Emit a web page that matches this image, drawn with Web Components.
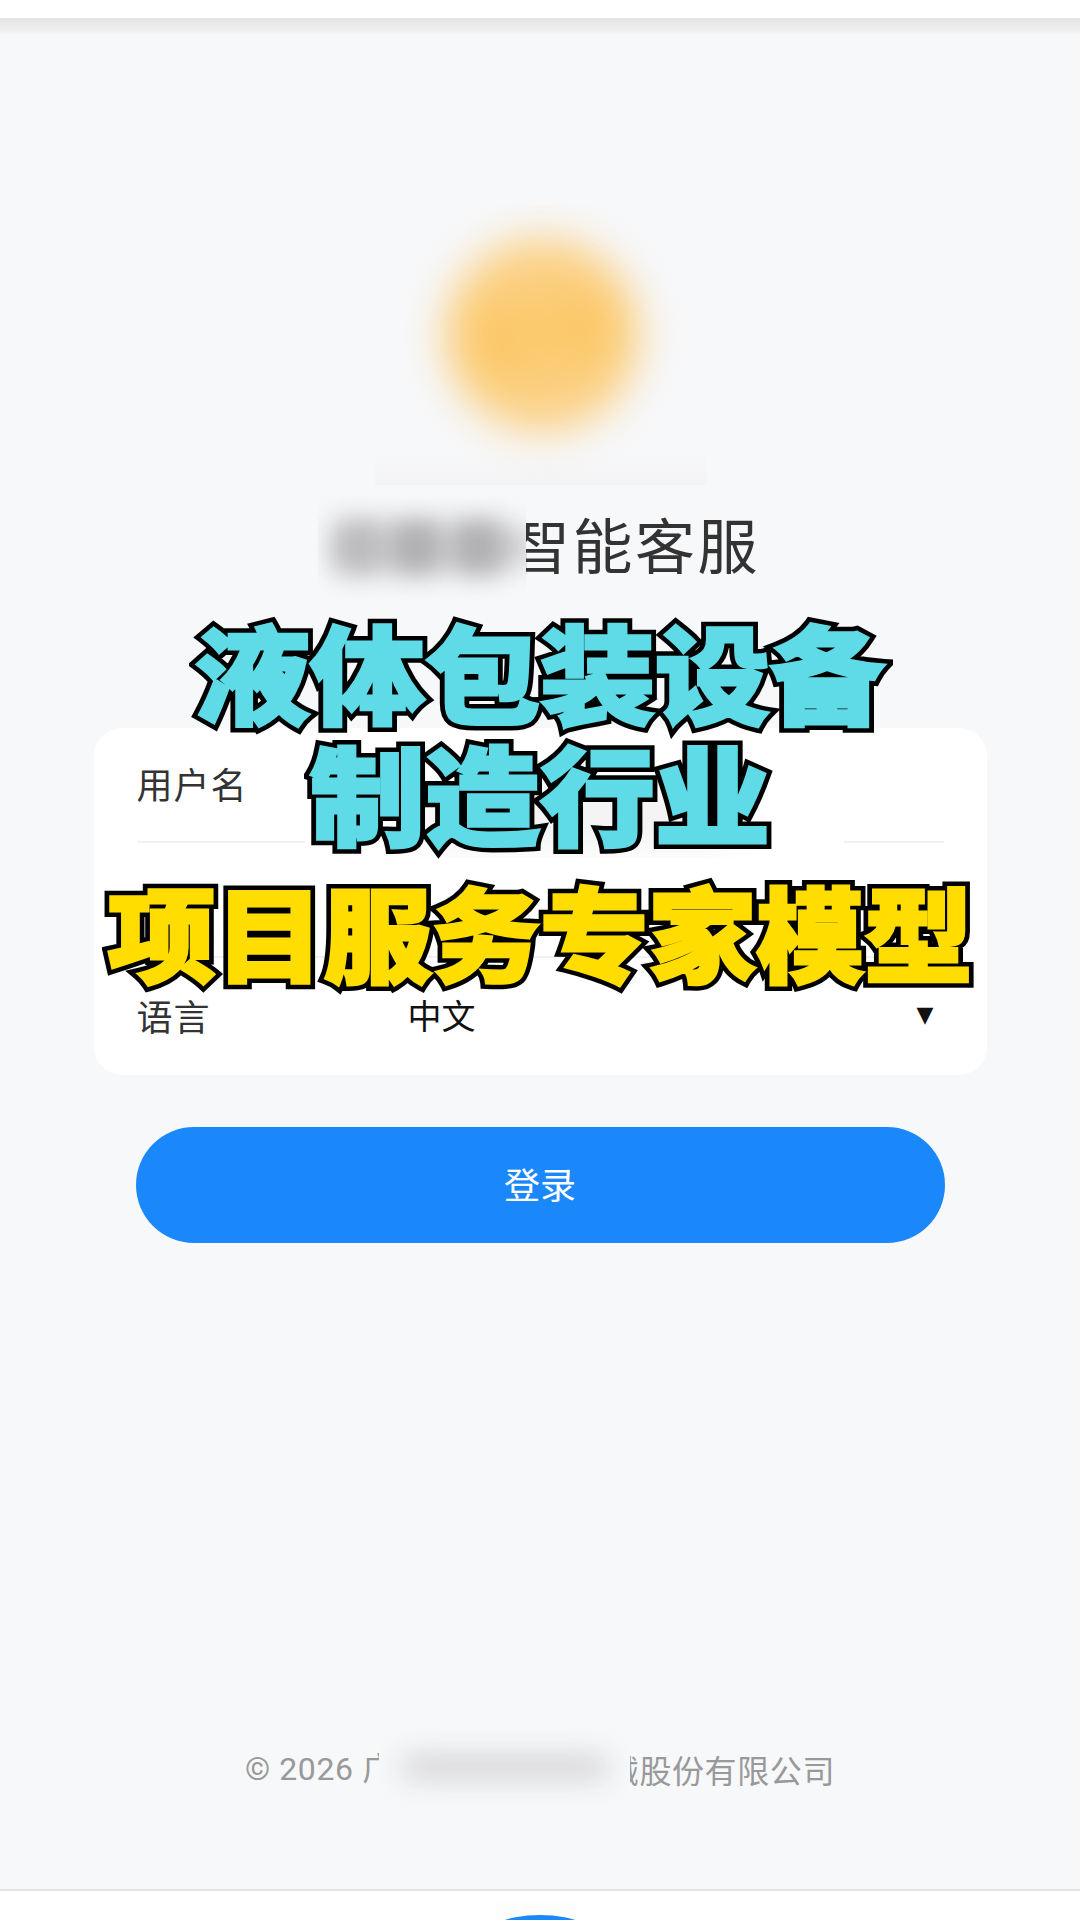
<!doctype html>
<html>
<head>
<meta charset="utf-8">
<style>
  html, body { margin: 0; padding: 0; background: #f7f8fa; }
  body { width: 1080px; height: 1920px; overflow: hidden; font-family: "Noto Sans CJK SC", "Noto Sans", sans-serif; }
</style>
</head>
<body>
<login-page>
  <blur-logo></blur-logo>
  <brand-title>智能客服</brand-title>
  <login-card>
    <form-row label="用户名"></form-row>
    <form-row></form-row>
    <form-row label="语言" value="中文" last></form-row>
  </login-card>
  <login-button>登录</login-button>
  <copy-footer></copy-footer>
  <tab-strip></tab-strip>
  <promo-banner slot="over">
    <promo-line color="#5fdbe7" size="107" scale="1.075">液体包装设备</promo-line>
    <promo-line color="#5fdbe7" size="107" scale="1.075">制造行业</promo-line>
    <promo-line color="#ffdd00" size="103" scale="1.05" class="gap">项目服务专家模型</promo-line>
  </promo-banner>
</login-page>

<script>
  function comp(name, css, html) {
    customElements.define(name, class extends HTMLElement {
      connectedCallback() {
        if (this.shadowRoot) return;
        var root = this.attachShadow({mode: 'open'});
        var out = typeof html == 'function' ? html(this) : html;
        root.innerHTML = '<style>' + css + '</style>' + out;
      }
    });
  }

  comp('login-page', `
    :host { display: flex; flex-direction: column; align-items: center; position: relative; width: 1080px; height: 1920px; overflow: hidden; }
    .top { height: 18px; width: 100%; background: #fff; flex: none; }
    .shade { height: 17px; width: 100%; flex: none; background: linear-gradient(#e3e3e5, #eeeeef 70%, #f7f8fa); }
  `, `
    <div class="top"></div>
    <div class="shade"></div>
    <slot></slot>
    <slot name="over"></slot>
  `);

  comp('blur-logo', `
    :host { display: block; position: relative; flex: none; margin-top: 170px; width: 331px; height: 280px; background: linear-gradient(#f7f8fa 88%, #f4f4f5 100%); overflow: hidden; }
    .dot { position: absolute; left: 70px; top: 33px; width: 194px; height: 194px; border-radius: 50%; filter: blur(21px);
      background: radial-gradient(circle at 28% 52%, #fbc55c 0, transparent 36%), radial-gradient(circle at 70% 46%, #fbc55c 0, transparent 36%), #fbd084; }
  `, `<div class="dot"></div>`);

  comp('brand-title', `
    :host { display: flex; position: relative; flex: none; margin-top: 15px; height: 86px; align-items: center; font-size: 60px; letter-spacing: 2.5px; color: #333; line-height: 1; }
    .hide { width: 190px; flex: none; }
    .patch { position: absolute; left: -2px; top: -4px; width: 208px; height: 104px; background: #f7f8fa; overflow: hidden; }
    .patch i { position: absolute; top: 24px; width: 52px; height: 54px; background: #b0b0b2; border-radius: 12px; filter: blur(13px); }
    .patch b { position: absolute; left: 26px; top: 32px; width: 190px; height: 38px; background: #d4d4d6; filter: blur(12px); }
  `, `
    <span class="hide"></span><slot></slot>
    <div class="patch"><b></b><i style="left:14px;background:#bcbcbe"></i><i style="left:72px"></i><i style="left:134px"></i></div>
  `);

  comp('login-card', `
    :host { display: block; position: relative; flex: none; margin-top: 142px; width: 893px; height: 347px; background: #fff; border-radius: 28px; box-sizing: border-box; padding: 0 43px; }
    .patch { position: absolute; left: 211px; top: 40px; width: 539px; height: 90px; background: #fff; overflow: hidden; }
    .patch i { position: absolute; left: 120px; top: 20px; width: 300px; height: 60px; background: #f3f3f3; filter: blur(16px); }
  `, `<slot></slot><div class="patch"><i></i></div>`);

  comp('form-row', `
    :host { display: flex; height: 115px; padding-bottom: 4px; align-items: center; border-bottom: 2px solid #f1f1f1; box-sizing: border-box; font-size: 36px; color: #333; }
    :host([last]) { border-bottom: 0; height: 117px; }
    .label { width: 271px; flex: none; letter-spacing: 1px; }
    .value { flex: 1; font-size: 34px; color: #111; }
    .arrow { font-family: "DejaVu Sans", sans-serif; font-size: 22px; color: #111; margin-right: 10px; }
  `, function (el) {
    var label = el.getAttribute('label') || '';
    var value = el.getAttribute('value');
    return '<span class="label">' + label + '</span>' +
      (value ? '<span class="value">' + value + '</span><span class="arrow">▼</span>' : '');
  });

  comp('login-button', `
    :host { display: flex; flex: none; margin-top: 52px; width: 809px; height: 116px; padding-bottom: 4px; box-sizing: border-box; border-radius: 58px; background: #1a88fb; color: #fff; font-size: 36px; align-items: center; justify-content: center; }
  `, `<slot></slot>`);

  comp('copy-footer', `
    :host { display: flex; position: relative; flex: none; margin-top: auto; margin-bottom: 96px; height: 48px; width: 590px; align-items: center; font-size: 32px; color: #999; white-space: pre; line-height: 1; }
    .en { font-family: Roboto, "Noto Sans CJK SC", sans-serif; letter-spacing: .6px; }
    .gap { flex: 1; }
    .end { letter-spacing: .6px; }
    .patch { position: absolute; left: 134px; top: -18px; width: 251px; height: 84px; background: #f7f8fa; overflow: hidden; }
    .patch i { position: absolute; left: 22px; top: 28px; width: 208px; height: 24px; background: #d4d4d6; border-radius: 12px; filter: blur(14px); }
  `, `<span class="en">© 2026 广</span><span class="gap"></span><span class="end">械股份有限公司</span>
      <div class="patch"><i></i></div>`);

  comp('tab-strip', `
    :host { display: block; position: relative; flex: none; width: 1080px; height: 31px; background: #fff; border-top: 2px solid #e4e4e4; box-sizing: border-box; overflow: hidden; }
    .halo { position: absolute; left: 496px; top: 12px; width: 80px; height: 20px; background: #fdfefb; }
    .arc { position: absolute; left: 476px; top: 24px; width: 128px; height: 60px; border-radius: 50%; background: #1a88fb; }
  `, `<div class="halo"></div><div class="arc"></div>`);

  comp('promo-banner', `
    :host { display: flex; flex-direction: column; position: absolute; left: 0; top: 609px; width: 1080px; pointer-events: none; }
  `, `<slot></slot>`);

  comp('promo-line', `
    :host { display: flex; justify-content: center; align-items: center; height: 120px; margin-bottom: 1px; line-height: 1; white-space: nowrap; font-weight: 900; }
    :host(.gap) { margin-top: 19px; }
    .t { position: relative; display: inline-block; -webkit-text-stroke: 12px #000; color: #000; }
    .t::after { content: attr(data-text); position: absolute; left: 0; top: 0; -webkit-text-stroke: 3px var(--fill); color: var(--fill); }
  `, function (el) {
    var text = el.textContent;
    el.style.setProperty('--fill', el.getAttribute('color'));
    return '<span class="t" data-text="' + text + '" style="font-size:' + el.getAttribute('size') +
      'px;transform:scaleX(' + el.getAttribute('scale') + ')"><slot></slot></span>';
  });
</script>
</body>
</html>
